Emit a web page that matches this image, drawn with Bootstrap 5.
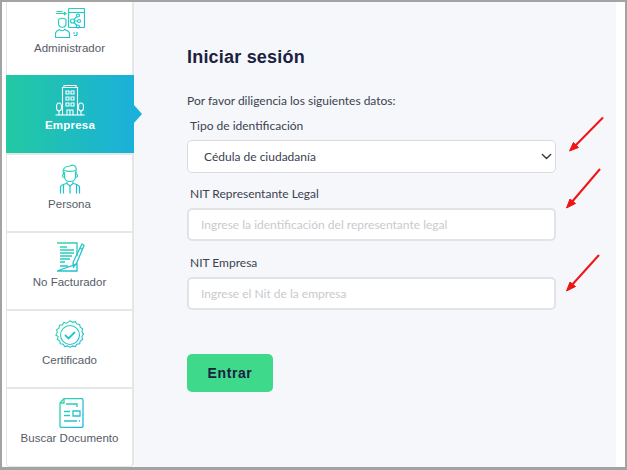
<!DOCTYPE html>
<html lang="es">
<head>
<meta charset="utf-8">
<title>Iniciar sesión</title>
<link href="https://cdn.jsdelivr.net/npm/bootstrap@5.3.0/dist/css/bootstrap.min.css" rel="stylesheet">
<style>
html,body{height:470px;overflow:hidden;background:#fff}
.shot-frame{position:relative;width:627px;height:470px;border:solid #a3a3a3;border-width:2px 2px 3px 2px;padding:0 9px 0 4px;background:#fff;overflow:hidden}
.side-rail{width:128px;flex:none;border:solid #e6e6e6;border-width:0 2px 1px 1px;border-radius:0 0 4px 4px;height:465px;background:#fff;font-family:"Liberation Sans",Arial,sans-serif}
.rail-item{height:78px;border-top:2px solid #e6e6e6;padding-top:9px;font-size:11.5px;line-height:14px;color:#555c68;text-align:center}
.rail-item svg{display:block;margin:0 auto 3px;width:30px;height:30px}
.rail-first{height:73px;border-top:0;padding-top:6px}
.rail-first svg{margin-bottom:3px}
.rail-active{position:relative;height:78px;margin:0 -2px 0 -1px;border-top:0;padding-top:9px;background:linear-gradient(90deg,#22c9a2,#1bb0da);color:#fff;font-weight:700;letter-spacing:.2px}
.rail-active svg{height:32px;margin-bottom:2px}
.rail-active::after{content:"";position:absolute;left:100%;top:30px;border-left:8px solid #1bb0da;border-top:9px solid transparent;border-bottom:9px solid transparent}
.form-pane{flex:1 1 auto;height:465px;background:#f5f7fa;padding:44px 60px 0 53px;font-family:Lato,sans-serif;font-size:12px;color:#3c4250}
.pane-title{font-family:"Liberation Sans",Arial,sans-serif;font-weight:700;font-size:18px;line-height:22px;letter-spacing:.2px;color:#1b2140;margin:0 0 24px}
.pane-intro{line-height:18px;margin:0 0 7px}
.pane-label{display:block;line-height:18px;margin:0 0 5px;padding-left:3px}
.pane-field{height:33px;font-size:12px;border-radius:5px;box-shadow:none;color:#3c4250;font-family:Lato,sans-serif}
select.pane-field{border:1px solid #d9dbdf;padding:1px 24px 0 16px;background-size:13px 11px;background-position:right 2px center}
input.pane-field{border:2px solid #e1e3e7;padding:0 12px;margin-bottom:13px}
input.pane-field::placeholder{color:#c9cacd;opacity:1}
.pane-gap{margin-bottom:12px}
.pane-btn{display:block;width:86px;height:38px;margin-top:44px;padding:0;border:0;border-radius:5px;background:#3fd98c;color:#1b2140;font-family:"Liberation Sans",Arial,sans-serif;font-weight:700;font-size:14px;letter-spacing:.6px}
.arrow-layer{position:absolute;left:-2px;top:-2px;width:627px;height:470px;pointer-events:none}
</style>
</head>
<body>
<div class="shot-frame d-flex">
  <svg width="0" height="0" class="position-absolute" aria-hidden="true"><defs>
    <linearGradient id="tg" gradientUnits="userSpaceOnUse" x1="0" y1="0" x2="30" y2="30"><stop offset="0" stop-color="#30dca0"/><stop offset="1" stop-color="#1cb4e8"/></linearGradient>
  </defs></svg>

  <nav class="side-rail">
    <div class="rail-item rail-first">
      <svg viewBox="0 0 30 30" fill="none" stroke="url(#tg)" stroke-width="1.200"><path d="M1.500 3.500h6M1 5.500h9M9 4l2 1.500-2 1.500"/><rect x="13.500" y=".5" width="16" height="19" rx="1"/><path d="M13.500 4.500h16"/><circle cx="17.500" cy="13" r="2"/><circle cx="23" cy="7.500" r="1.500"/><circle cx="24" cy="13" r="1.500"/><circle cx="23" cy="18.500" r="1.500"/><path d="M19 11.500l3-3M19.500 13h3M19 14.500l3 3"/><path d="M3.500 12.500c0-3 7.500-3 7.500 0v3c0 5-7.500 5-7.500 0z"/><path d="M.5 29.500v-4c0-2.500 3-3.500 4-4 1 1.500 4 1.500 5 0 1.500.5 5 1.500 5 4v4z"/><path d="M18 25h2M19 27.500h3M22 24v3"/></svg>
      Administrador
    </div>
    <div class="rail-item rail-active">
      <svg viewBox="0 0 30 32" fill="none" stroke="#fff" stroke-width="1.100"><path d="M7.500 31V3.500h15V31M9 3.500V1.500h12v2"/><path d="M11 7h3v3h-3zM16 7h3v3h-3zM11 13h3v3h-3zM16 13h3v3h-3zM11 19h3v3h-3zM16 19h3v3h-3z"/><path d="M12 31v-5h6v5M15 26v5"/><path d="M.5 31h29"/><path d="M4 31v-5M26 31v-5"/><ellipse cx="4" cy="23" rx="2.500" ry="4"/><ellipse cx="26" cy="23" rx="2.500" ry="4"/></svg>
      Empresa
    </div>
    <div class="rail-item">
      <svg viewBox="0 0 30 30" fill="none" stroke="url(#tg)" stroke-width="1.200"><path d="M9 11c-2-5 0-9 6-9 3-2 7 0 6 4v5"/><path d="M9 6.500c3 1 8 1 12 0"/><path d="M9.500 8v5c0 6 11 6 11 0V8"/><path d="M8.500 10.500c-1.500 0-1.500 3 1 3M21.500 10.500c1.500 0 1.500 3-1 3"/><path d="M12 17.500v2l3 2.500 3-2.500v-2"/><path d="M5.500 29.500v-7c1-1.500 4-2.500 6.500-3M24.500 29.500v-7c-1-1.500-4-2.500-6.500-3"/><path d="M8.500 29.500V21M21.500 29.500V21M15 22v7.500"/></svg>
      Persona
    </div>
    <div class="rail-item">
      <svg viewBox="0 0 30 30" fill="none" stroke="url(#tg)" stroke-width="1.300"><path d="M2 1h20v13M22 22v7H2z"/><path d="M5 5h7M5 8h14M5 11h14M5 14h12M5 17h10M5 20h5M5 24h8"/><path d="M27 2l2 1.500-7.500 18-3 3.500-.5-4.500z"/><path d="M25 6l2.500 1.500"/></svg>
      No Facturador
    </div>
    <div class="rail-item">
      <svg viewBox="0 0 30 30" fill="none" stroke="url(#tg)" stroke-width="1.100"><circle cx="15" cy="15" r="9.500"/><path d="M15 .8l2.500 1.500 2.800-.7 1.500 2.400 2.900.4.500 2.800 2.400 1.600-.7 2.800 1.500 2.500-1.500 2.500.7 2.800-2.400 1.600-.5 2.800-2.900.4-1.500 2.400-2.800-.7-2.500 1.500-2.500-1.500-2.800.7-1.500-2.400-2.900-.4-.5-2.800-2.400-1.600.7-2.800L.8 15l1.500-2.500-.7-2.800L4 8.100l.5-2.800 2.900-.4 1.500-2.400 2.800.7z"/><path d="M10 15l3.500 3.500 6.500-6.500" stroke-width="1.800"/></svg>
      Certificado
    </div>
    <div class="rail-item">
      <svg viewBox="0 0 30 30" fill="none" stroke="url(#tg)" stroke-width="1.300"><path d="M9 .5h17.500a1.500 1.500 0 0 1 1.500 1.500v26a1.500 1.500 0 0 1-1.500 1.500h-20A1.500 1.500 0 0 1 5 28V5z"/><path d="M5 5h4V.5"/><path d="M11 6h11v3M9 13.500h6M9 17.500h6M18 13h7v5h-7zM9 23h13M24 23h1"/></svg>
      Buscar Documento
    </div>
  </nav>

  <main class="form-pane">
    <h1 class="pane-title">Iniciar sesión</h1>
    <p class="pane-intro">Por favor diligencia los siguientes datos:</p>
    <label class="pane-label" for="tipo">Tipo de identificación</label>
    <select id="tipo" class="form-select pane-field pane-gap"><option>Cédula de ciudadanía</option></select>
    <label class="pane-label" for="rep">NIT Representante Legal</label>
    <input id="rep" class="form-control pane-field" placeholder="Ingrese la identificación del representante legal">
    <label class="pane-label" for="emp">NIT Empresa</label>
    <input id="emp" class="form-control pane-field" placeholder="Ingrese el Nit de la empresa">
    <button type="button" class="btn pane-btn">Entrar</button>
  </main>

  <svg class="arrow-layer" viewBox="0 0 627 470" aria-hidden="true">
    <g fill="#f01414" stroke="#f01414">
      <path d="M603 117.500L574 147" stroke-width="2" fill="none"/><path d="M569.500 151l9-3.500-5-5z"/>
      <path d="M600 169L571 203" stroke-width="2" fill="none"/><path d="M566.500 208l9-4.500-5.500-4.500z"/>
      <path d="M599 255L571 286" stroke-width="2" fill="none"/><path d="M566.500 291l9-4.500-5.500-4.500z"/>
    </g>
  </svg>
</div>
<script src="https://cdn.jsdelivr.net/npm/bootstrap@5.3.0/dist/js/bootstrap.bundle.min.js"></script>
</body>
</html>
